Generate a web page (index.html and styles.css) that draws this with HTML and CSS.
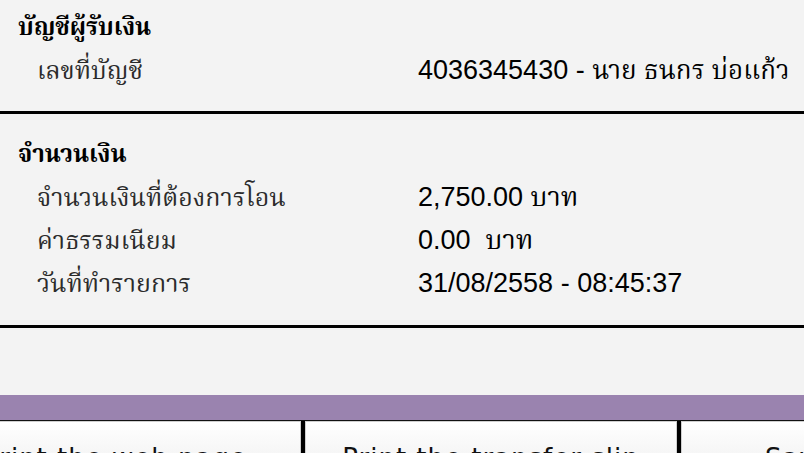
FILE: index.html
```html
<!DOCTYPE html>
<html lang="th">
<head>
<meta charset="utf-8">
<link rel="stylesheet" href="styles.css">
</head>
<body>
<div class="page">
  <section class="section first">
    <h2 class="section-title">บัญชีผู้รับเงิน</h2>
    <div class="row">
      <div class="label">เลขที่บัญชี</div>
      <div class="value">4036345430 - <span class="thai">นาย ธนกร บ่อแก้ว</span></div>
    </div>
  </section>
  <section class="section second">
    <h2 class="section-title">จำนวนเงิน</h2>
    <div class="row">
      <div class="label">จำนวนเงินที่ต้องการโอน</div>
      <div class="value">2,750.00 บาท</div>
    </div>
    <div class="row">
      <div class="label">ค่าธรรมเนียม</div>
      <div class="value">0.00&nbsp; บาท</div>
    </div>
    <div class="row">
      <div class="label">วันที่ทำรายการ</div>
      <div class="value">31/08/2558 - 08:45:37</div>
    </div>
  </section>
  <div class="spacer"></div>
  <div class="band"></div>
  <div class="toolbar">
    <button class="btn">Print the web page</button>
    <button class="btn">Print the transfer slip</button>
    <button class="btn">Save as image</button>
  </div>
</div>
</body>
</html>
```
FILE: styles.css
```css
html, body {
  margin: 0;
  padding: 0;
  background: #f3f3f3;
  overflow: hidden;
}
.page {
  width: 804px;
  height: 453px;
  overflow: hidden;
}
.section {
  box-sizing: border-box;
  border-bottom: 3px solid #000;
  padding-left: 18px;
}
.section.first {
  height: 114px;
  padding-top: 6px;
}
.section.second {
  height: 214px;
  padding-top: 19px;
}
.section-title {
  margin: 0;
  font-family: "Liberation Serif", "Noto Serif Thai", serif;
  font-weight: bold;
  font-size: 24px;
  line-height: 43px;
  color: #000;
}
.row {
  display: grid;
  grid-template-columns: 381px 1fr;
  align-items: baseline;
  padding-left: 19px;
  line-height: 43px;
}
.label {
  font-family: "Liberation Serif", "Noto Serif Thai", serif;
  font-size: 25px;
  color: #2b2b2b;
}
.value {
  font-family: "Liberation Sans", "Noto Serif Thai", sans-serif;
  font-size: 27px;
  color: #000;
}
.thai {
  font-size: 26px;
}
.spacer {
  height: 67px;
}
.band {
  height: 25px;
  background: #9a83af;
}
.toolbar {
  display: flex;
  gap: 4px;
  margin-left: -71px;
  border-top: 1px solid #111;
  background: #000;
  height: 40px;
}
.btn {
  flex: 0 0 372px;
  box-sizing: border-box;
  height: 40px;
  margin: 0;
  padding: 21px 0 0;
  border: 1px solid #cfcfcf;
  background: linear-gradient(#ffffff, #f4f4f4);
  font-family: "DejaVu Sans", sans-serif;
  font-size: 26px;
  line-height: 30px;
  letter-spacing: 1px;
  color: #111;
  text-align: center;
  white-space: nowrap;
  display: block;
}
```
